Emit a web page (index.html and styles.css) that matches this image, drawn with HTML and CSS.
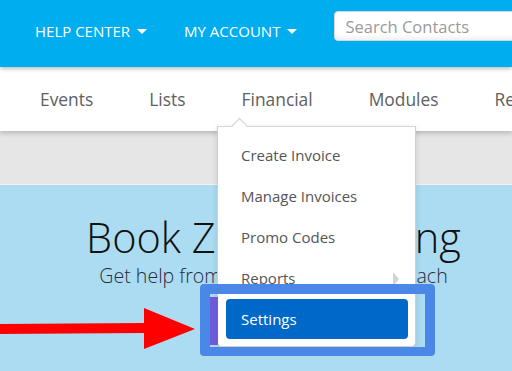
FILE: index.html
```html
<!DOCTYPE html>
<html lang="en">
<head>
    <meta charset="UTF-8">
    <meta name="viewport" content="width=device-width, initial-scale=1.0">
    <title>Financial Settings</title>
    <link rel="stylesheet" href="styles.css">
</head>
<body>
    <header class="topbar">
        <a class="top-link">Help Center <span class="caret"></span></a>
        <a class="top-link">My Account <span class="caret"></span></a>
        <input class="search" type="text" placeholder="Search Contacts">
    </header>

    <nav class="mainnav">
        <a>Events</a>
        <a>Lists</a>
        <a>Financial</a>
        <a>Modules</a>
        <a>Reports</a>
    </nav>

    <div class="subbar"></div>

    <section class="hero">
        <h1>Book Zoom Training</h1>
        <p>Get help from our certified Zoom coach</p>
    </section>

    <!-- Financial dropdown -->
    <ul class="dropdown">
        <li>Create Invoice</li>
        <li>Manage Invoices</li>
        <li>Promo Codes</li>
        <li class="has-sub">Reports</li>
        <li class="active">Settings</li>
    </ul>

    <!-- annotation -->
    <div class="highlight">
        <span class="strip"></span>
    </div>
    <svg class="arrow" width="200" height="50" viewBox="0 0 200 50">
        <polygon points="0,16 145,15 145,25 0,26" fill="#ff0000"/>
        <polygon points="144,0 195,21 144,41" fill="#ff0000"/>
    </svg>
</body>
</html>
```

FILE: styles.css
```css
/* base */
body {
    margin: 0;
    font-family: 'Open Sans', 'Liberation Sans', sans-serif;
    background: #acdcf2;
    overflow: hidden;
    height: 371px;
}

a {
    text-decoration: none;
    cursor: pointer;
}

/* top blue bar */
.topbar {
    background: #00adee;
    height: 67px;
    display: flex;
    align-items: center;
    padding-left: 35px;
    gap: 37px;
    position: relative;
    z-index: 3;
    box-shadow: 0 2px 4px rgba(0, 0, 0, 0.25);
    overflow: hidden;
}

.top-link {
    color: #ffffff;
    font-size: 15px;
    text-transform: uppercase;
    display: flex;
    align-items: center;
    gap: 7px;
    margin-top: -6px;
    white-space: nowrap;
}

.caret {
    width: 0;
    height: 0;
    border-left: 5px solid transparent;
    border-right: 5px solid transparent;
    border-top: 5px solid #ffffff;
    margin-top: 2px;
}

.search {
    margin-left: 0;
    margin-top: -15px;
    width: 220px;
    height: 30px;
    box-sizing: border-box;
    border: 1px solid #d6d6d6;
    border-radius: 4px;
    padding: 0 10px;
    font-family: inherit;
    font-size: 16.5px;
    box-shadow: inset 0 -3px 4px rgba(0, 0, 0, 0.06);
    flex-shrink: 0;
}

.search::placeholder {
    color: #9a9a9a;
}

/* main nav */
.mainnav {
    background: #ffffff;
    height: 64px;
    display: flex;
    align-items: center;
    padding-left: 40px;
    gap: 56px;
    position: relative;
    z-index: 2;
    box-shadow: 0 2px 5px rgba(0, 0, 0, 0.22);
    white-space: nowrap;
    overflow: hidden;
}

.mainnav a {
    color: #606060;
    font-size: 17.4px;
}

.subbar {
    background: #e6e6e6;
    height: 53px;
    border-bottom: 1px solid #f2f2f2;
}

/* hero */
.hero {
    text-align: center;
    padding: 27px 0 0 35px;
    white-space: nowrap;
}

.hero h1 {
    margin: 0;
    font-size: 41.5px;
    font-weight: 300;
    line-height: 50px;
    color: #111111;
}

.hero p {
    margin: 0;
    font-size: 19.6px;
    font-weight: 300;
    color: #2a2a3a;
}

/* dropdown menu */
.dropdown {
    position: absolute;
    left: 217px;
    top: 126px;
    width: 199px;
    box-sizing: border-box;
    margin: 0;
    padding: 8px 0 7px;
    list-style: none;
    background: #ffffff;
    border: 1px solid #cfcfcf;
    border-top-color: #d8d8d8;
    border-radius: 0 0 5px 5px;
    box-shadow: 0 2px 6px rgba(0, 0, 0, 0.12);
    z-index: 4;
}

.dropdown::before {
    content: "";
    position: absolute;
    left: 16px;
    top: -7px;
    width: 10px;
    height: 10px;
    background: #ffffff;
    border-left: 1px solid #d0d0d0;
    border-top: 1px solid #d0d0d0;
    transform: rotate(45deg);
}

.dropdown li {
    height: 41px;
    line-height: 41px;
    padding-left: 23px;
    font-size: 15px;
    color: #555555;
    position: relative;
}

.dropdown li.has-sub::after {
    content: "";
    position: absolute;
    right: 16px;
    top: 14px;
    border-top: 7px solid transparent;
    border-bottom: 7px solid transparent;
    border-left: 6px solid #d4d4d4;
}

.dropdown li.active {
    height: 40px;
    line-height: 40px;
    margin: 0 7px 0 8px;
    padding-left: 15px;
    background: #0068c9;
    color: #ffffff;
    border-radius: 4px;
}

/* annotation */
.highlight {
    position: absolute;
    left: 200px;
    top: 284px;
    width: 235px;
    height: 72px;
    box-sizing: border-box;
    border: 10px solid #4b87e6;
    border-bottom-width: 9px;
    border-radius: 4px;
    z-index: 5;
}

.strip {
    position: absolute;
    left: 0;
    top: 3px;
    width: 8px;
    height: 48px;
    background: #6e5bdc;
}

.arrow {
    position: absolute;
    left: 0;
    top: 308px;
    z-index: 5;
}
```
